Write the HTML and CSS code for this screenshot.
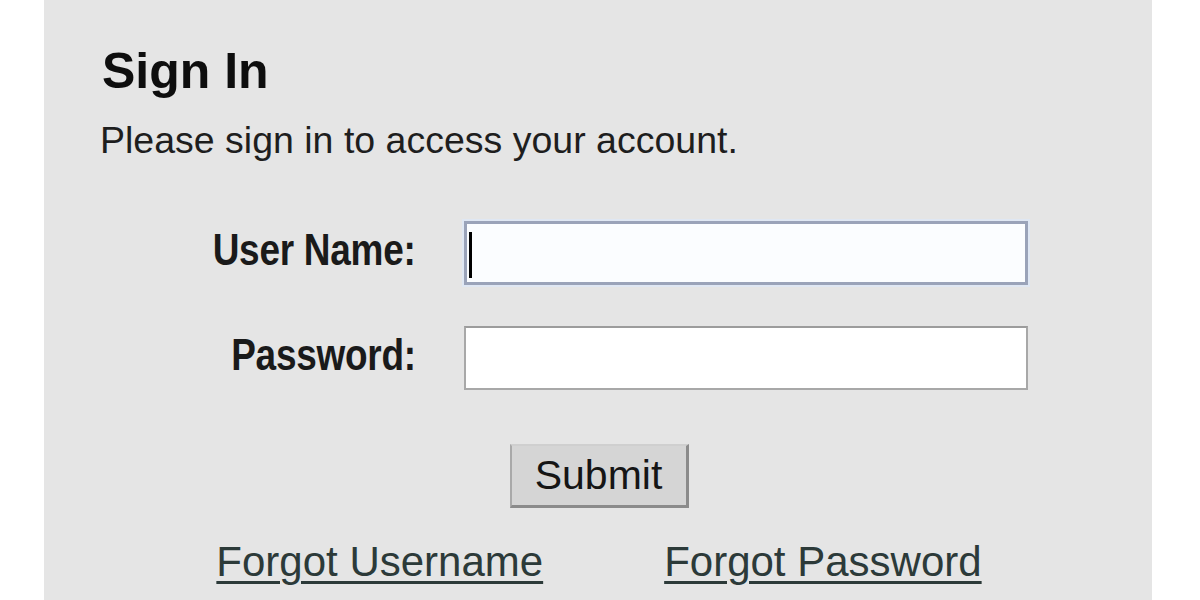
FILE: index.html
```html
<!DOCTYPE html>
<html lang="en">
<head>
<meta charset="utf-8">
<title>Sign In</title>
<link rel="stylesheet" href="styles.css">
</head>
<body>
<div class="page">
  <main class="panel">
    <h1 class="title">Sign In</h1>
    <p class="intro">Please sign in to access your account.</p>
    <form class="login-form" onsubmit="return false">
      <label class="field-label" for="username"><span class="label-text">User Name:</span></label>
      <div class="field-wrap">
        <input class="field field-focus" id="username" type="text">
        <span class="caret"></span>
      </div>
      <label class="field-label" for="password"><span class="label-text">Password:</span></label>
      <div class="field-wrap">
        <input class="field" id="password" type="password">
      </div>
    </form>
    <div class="actions">
      <button class="submit-btn" type="button">Submit</button>
    </div>
    <div class="links">
      <a class="link" href="#">Forgot Username</a>
      <a class="link" href="#">Forgot Password</a>
    </div>
  </main>
</div>
</body>
</html>
```
FILE: styles.css
```css
html, body {
  margin: 0;
  padding: 0;
  background: #ffffff;
}

body {
  font-family: "Liberation Sans", Arial, sans-serif;
  color: #151515;
}

.page {
  width: 1200px;
  height: 600px;
  overflow: hidden;
  display: flex;
}

.panel {
  margin-left: 44px;
  width: 1108px;
  height: 600px;
  background: #e5e5e5;
  box-sizing: border-box;
  padding-left: 58px;
  display: flex;
  flex-direction: column;
}

.title {
  margin: 46px 0 0 0;
  font-size: 50px;
  line-height: 50px;
  font-weight: bold;
  color: #0e0e0e;
}

.intro {
  margin: 25px 0 0 -2px;
  font-size: 37.5px;
  line-height: 38px;
  color: #1e1e1e;
}

.login-form {
  margin-top: 62px;
  display: grid;
  grid-template-columns: 314px 564px;
  column-gap: 48px;
  row-gap: 41px;
}

.field-label {
  font-weight: bold;
  font-size: 44px;
  line-height: 58px;
  text-align: right;
  color: #1a1a1a;
}

.label-text {
  display: inline-block;
  transform: scaleX(0.84);
  transform-origin: right center;
  letter-spacing: -0.3px;
}

.field-wrap {
  position: relative;
  height: 64px;
}

.field {
  display: block;
  width: 564px;
  height: 64px;
  box-sizing: border-box;
  margin: 0;
  padding: 0 8px;
  background: #ffffff;
  border: 2px solid #a8a8a8;
  border-top-color: #9c9c9c;
  outline: none;
  font-size: 37px;
  font-family: "Liberation Sans", Arial, sans-serif;
}

.field-focus {
  border: 3px solid #9aa3b9;
  background: #fbfdff;
  box-shadow: 0 0 0 2px #dfe7f3;
}

.caret {
  position: absolute;
  left: 5px;
  top: 11px;
  width: 3px;
  height: 46px;
  background: #000000;
}

.actions {
  margin-top: 54px;
  display: flex;
  justify-content: center;
  padding-right: 56px;
}

.submit-btn {
  width: 179px;
  height: 64px;
  box-sizing: border-box;
  padding: 0;
  margin: 0;
  background: #d5d5d5;
  border-top: 2px solid #cfcfcf;
  border-left: 2px solid #a9a9a9;
  border-right: 3px solid #8b8b8b;
  border-bottom: 3px solid #8b8b8b;
  border-radius: 0;
  font-family: "Liberation Sans", Arial, sans-serif;
  font-size: 41px;
  color: #151515;
}

.links {
  margin-top: 30px;
  display: flex;
  justify-content: center;
  gap: 121px;
  padding-right: 56px;
}

.link {
  font-size: 42px;
  line-height: 48px;
  color: #2c3a39;
  text-decoration: underline;
  text-decoration-thickness: 3px;
  text-underline-offset: 5px;
}
```
